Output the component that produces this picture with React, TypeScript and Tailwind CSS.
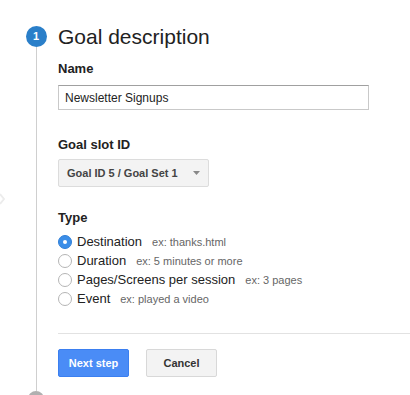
import { useState } from "react";

const types = [
  { label: "Destination", hint: "ex: thanks.html" },
  { label: "Duration", hint: "ex: 5 minutes or more" },
  { label: "Pages/Screens per session", hint: "ex: 3 pages" },
  { label: "Event", hint: "ex: played a video" },
];

export default function App() {
  const [type, setType] = useState(0);

  return (
    <div
      className="w-[410px] h-[395px] overflow-hidden bg-white flex text-[#222]"
      style={{ fontFamily: '"Liberation Sans", Arial, sans-serif' }}
    >
      {/* Edge handle */}
      <div className="w-[26px] flex items-start pt-[192px]">
        <svg width="5" height="14" viewBox="0 0 5 14">
          <path d="M0 2 L4 7 L0 12" fill="none" stroke="#ececec" strokeWidth="2" />
        </svg>
      </div>

      {/* Step rail */}
      <div className="w-[20px] flex flex-col items-center pt-[26px]">
        <div className="w-[21px] h-[21px] rounded-full bg-[#2a7fc9] text-white text-[11px] font-bold flex items-center justify-center shrink-0">
          1
        </div>
        <div className="w-px flex-1 bg-[#cfcfcf]" />
        <div className="w-[16px] h-[8px] rounded-t-full bg-[#b0b0b0] mt-[-4px] shrink-0 relative top-[4px]" />
      </div>

      {/* Content */}
      <div className="flex-1 pl-[12px] flex flex-col">
        <h1 className="text-[21px] leading-[24px] mt-[25px]">Goal description</h1>

        <div className="text-[13px] font-bold leading-[16px] mt-[12px]">Name</div>
        <input
          defaultValue="Newsletter Signups"
          className="mt-[8px] w-[311px] h-[25px] border border-[#c9c9c9] border-t-[#a0a0a0] px-[6px] text-[12px] text-[#222] outline-none"
        />

        <div className="text-[13px] font-bold leading-[16px] mt-[27px]">Goal slot ID</div>
        <button className="mt-[6px] w-[151px] h-[28px] rounded-[2px] border border-[#dcdcdc] bg-[#f3f3f3] flex items-center pl-[8px] pr-[8px] text-[11px] font-bold text-[#444]">
          <span className="flex-1 text-left">Goal ID 5 / Goal Set 1</span>
          <svg width="7" height="4" viewBox="0 0 7 4">
            <path d="M0 0 L7 0 L3.5 4 Z" fill="#888" />
          </svg>
        </button>

        <div className="text-[13px] font-bold leading-[16px] mt-[23px]">Type</div>
        <div className="mt-[6px] flex flex-col">
          {types.map((t, i) => (
            <label key={t.label} className="h-[19px] flex items-center gap-[5px] cursor-pointer" onClick={() => setType(i)}>
              {type === i ? (
                <span className="w-[14px] h-[14px] rounded-full bg-[#3b8ee8] border border-[#2f7fd8] flex items-center justify-center shrink-0">
                  <span className="w-[4px] h-[4px] rounded-full bg-white" />
                </span>
              ) : (
                <span className="w-[14px] h-[14px] rounded-full border border-[#b5b5b5] bg-white shrink-0" />
              )}
              <span className="text-[13px] leading-[16px]">{t.label}</span>
              <span className="text-[11px] text-[#666] ml-[5px] mt-[2px]">{t.hint}</span>
            </label>
          ))}
        </div>

        <div className="h-px bg-[#e2e2e2] mt-[25px]" />

        <div className="mt-[15px] flex gap-[17px]">
          <button className="w-[71px] h-[28px] rounded-[2px] border border-[#3b7ff0] bg-[#4a8cf6] text-white text-[11px] font-bold">
            Next step
          </button>
          <button className="w-[71px] h-[28px] rounded-[2px] border border-[#d8d8d8] bg-[#f3f3f3] text-[#333] text-[11px] font-bold">
            Cancel
          </button>
        </div>
      </div>
    </div>
  );
}
